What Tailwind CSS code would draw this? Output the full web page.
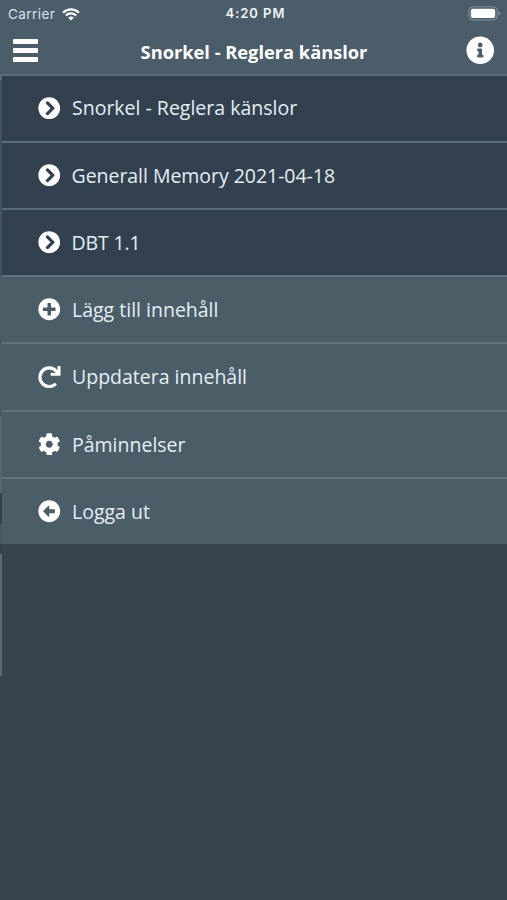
<!DOCTYPE html>
<html lang="sv">
<head>
<meta charset="utf-8">
<title>Snorkel</title>
<script src="https://cdn.jsdelivr.net/npm/@tailwindcss/browser@4"></script>
</head>
<body class="bg-[#38454c]">
<svg class="hidden">
  <symbol id="chevron" viewBox="0 0 512 512"><path d="M256 8c137 0 248 111 248 248S393 504 256 504 8 393 8 256 119 8 256 8zm113.9 231L234.4 103.5c-9.4-9.4-24.6-9.4-33.9 0l-17 17c-9.4 9.4-9.4 24.6 0 33.9L285.1 256 183.5 357.6c-9.4 9.4-9.4 24.6 0 33.9l17 17c9.4 9.4 24.6 9.4 33.9 0L369.9 273c9.4-9.4 9.4-24.6 0-34z"/></symbol>
</svg>
<div class="relative flex h-[900px] w-[507px] flex-col overflow-hidden bg-[#38454c] font-['Open_Sans',sans-serif] text-[#e4eef5]">
  <header class="h-[73.5px] shrink-0 bg-[#4b5d68]">
    <div class="flex h-[27px] items-center justify-between pr-[6px] pl-[8px] font-[Inter,sans-serif] text-[13px]">
      <div class="flex w-[100px] items-center gap-[7px] pt-px text-[#dbe3e8]">
        <span class="w-[47px] text-[13.5px] tracking-[0.45px]">Carrier</span>
        <svg class="h-[13px] w-[18px]" viewBox="0 0 18 13" fill="none" stroke="#fff" stroke-width="2.1"><path d="M1 4.7a11.3 11.3 0 0 1 16 0M3.8 7.6a7.3 7.3 0 0 1 10.4 0"/><path d="M9 12.6 6.2 9.8a4 4 0 0 1 5.6 0z" fill="#fff" stroke="none"/></svg>
      </div>
      <span class="pt-px pl-[2px] font-semibold tracking-[0.95px] text-[#eef3f6]">4:20 PM</span>
      <div class="flex w-[100px] justify-end">
        <svg class="h-[15px] w-[33px]" viewBox="0 0 33 15"><rect x=".8" y=".8" width="28.4" height="13.2" rx="4" fill="none" stroke="#87949c" stroke-width="1"/><rect x="2.8" y="2.8" width="24.4" height="9.2" rx="2" fill="#fff"/><path d="M30.7 5.2q1.6.7 1.6 2.3t-1.6 2.3z" fill="#87949c"/></svg>
      </div>
    </div>
    <div class="flex h-[47px] items-center justify-between pr-[12.5px] pl-[13px]">
      <div class="flex w-[29px] flex-col gap-[4.5px]">
        <span class="h-[4.5px] w-[25px] rounded-[1px] bg-white"></span>
        <span class="h-[4.5px] w-[25px] rounded-[1px] bg-white"></span>
        <span class="h-[4.5px] w-[25px] rounded-[1px] bg-white"></span>
      </div>
      <h1 class="pt-[3px] text-[18.25px] font-bold whitespace-nowrap text-white">Snorkel - Reglera känslor</h1>
      <svg class="size-[28.5px] fill-white" viewBox="0 0 512 512"><path d="M256 8C119 8 8 119 8 256s111 248 248 248 248-111 248-248S393 8 256 8zm0 110c23.2 0 42 18.8 42 42s-18.8 42-42 42-42-18.8-42-42 18.8-42 42-42zm56 254c0 6.6-5.4 12-12 12h-88c-6.6 0-12-5.4-12-12v-24c0-6.6 5.4-12 12-12h12v-64h-12c-6.6 0-12-5.4-12-12v-24c0-6.6 5.4-12 12-12h64c6.6 0 12 5.4 12 12v100h12c6.6 0 12 5.4 12 12v24z"/></svg>
    </div>
  </header>
  <nav class="ml-[2px] grid h-[470.5px] shrink-0 grid-rows-7 text-[19.5px] whitespace-nowrap">
    <a class="flex items-center gap-[11.5px] border-t-[2.5px] border-[#5b6d79] bg-[#33414e] pl-[36px]"><svg class="size-[22.5px] fill-white"><use href="#chevron"/></svg><span>Snorkel - Reglera känslor</span></a>
    <a class="flex items-center gap-[11.5px] border-t-[2.5px] border-[#5b6d79] bg-[#33414e] pl-[35.5px]"><svg class="size-[22.5px] fill-white"><use href="#chevron"/></svg><span class="tracking-[-0.04px]">Generall Memory 2021-04-18</span></a>
    <a class="flex items-center gap-[11.5px] border-t-[2.5px] border-[#5b6d79] bg-[#33414e] pl-[35.5px]"><svg class="size-[22.5px] fill-white"><use href="#chevron"/></svg><span class="tracking-[-0.15px]">DBT 1.1</span></a>
    <a class="flex items-center gap-[11.5px] border-t-[2.5px] border-[#63747f] bg-[#4b5d67] pl-[36px]"><svg class="size-[22.5px] fill-white" viewBox="0 0 512 512"><path d="M256 8C119 8 8 119 8 256s111 248 248 248 248-111 248-248S393 8 256 8zm144 276c0 6.6-5.4 12-12 12h-92v92c0 6.6-5.4 12-12 12h-56c-6.6 0-12-5.4-12-12v-92h-92c-6.6 0-12-5.4-12-12v-56c0-6.6 5.4-12 12-12h92v-92c0-6.6 5.4-12 12-12h56c6.6 0 12 5.4 12 12v92h92c6.6 0 12 5.4 12 12v56z"/></svg><span>Lägg till innehåll</span></a>
    <a class="flex items-center gap-[11.5px] border-t-[2.5px] border-[#63747f] bg-[#4b5d67] pl-[36px]"><svg class="size-[22.5px] fill-white" viewBox="0 0 512 512"><path d="M500.33 0h-47.41a12 12 0 0 0-12 12.57l4 82.76A247.42 247.42 0 0 0 256 8C119.34 8 7.9 119.53 8 256.19 8.1 393.07 119.1 504 256 504a247.1 247.1 0 0 0 166.18-63.91 12 12 0 0 0 .48-17.43l-34-34a12 12 0 0 0-16.38-.55A176 176 0 1 1 402.1 157.8l-101.53-4.87a12 12 0 0 0-12.57 12v47.41a12 12 0 0 0 12 12h200.33a12 12 0 0 0 12-12V12a12 12 0 0 0-12-12z"/></svg><span>Uppdatera innehåll</span></a>
    <a class="flex items-center gap-[11.5px] border-t-[2.5px] border-[#63747f] bg-[#4b5d67] pl-[36px]"><svg class="size-[22.5px] fill-white" viewBox="0 0 512 512"><path d="M487.4 315.7l-42.6-24.6c4.3-23.2 4.3-47 0-70.2l42.6-24.6c4.9-2.8 7.1-8.6 5.5-14-11.1-35.6-30-67.8-54.7-94.6-3.8-4.1-10-5.1-14.8-2.3L380.8 110c-17.9-15.4-38.5-27.3-60.8-35.1V25.8c0-5.6-3.9-10.5-9.4-11.7-36.7-8.2-74.3-7.8-109.2 0-5.5 1.2-9.4 6.1-9.4 11.7V75c-22.2 7.9-42.8 19.8-60.8 35.1L88.7 85.5c-4.9-2.8-11-1.9-14.8 2.3-24.7 26.7-43.6 58.9-54.7 94.6-1.7 5.4.6 11.2 5.5 14L67.3 221c-4.3 23.2-4.3 47 0 70.2l-42.6 24.6c-4.9 2.8-7.1 8.6-5.5 14 11.1 35.6 30 67.8 54.7 94.6 3.8 4.1 10 5.1 14.8 2.3l42.6-24.6c17.9 15.4 38.5 27.3 60.8 35.1v49.2c0 5.6 3.9 10.5 9.4 11.7 36.7 8.2 74.3 7.8 109.2 0 5.5-1.2 9.4-6.1 9.4-11.7v-49.2c22.2-7.9 42.8-19.8 60.8-35.1l42.6 24.6c4.9 2.8 11 1.9 14.8-2.3 24.7-26.7 43.6-58.9 54.7-94.6 1.5-5.5-.7-11.3-5.6-14.1zM256 336c-44.1 0-80-35.9-80-80s35.9-80 80-80 80 35.9 80 80-35.9 80-80 80z"/></svg><span>Påminnelser</span></a>
    <a class="flex items-center gap-[11.5px] border-t-[2.5px] border-[#63747f] bg-[#4b5d67] pl-[36px]"><svg class="size-[22.5px] fill-white" viewBox="0 0 512 512"><path d="M256 504C119 504 8 393 8 256S119 8 256 8s248 111 248 248-111 248-248 248zm116-292H256v-70.9c0-10.7-13-16.1-20.5-8.5L121.2 247.5c-4.7 4.7-4.7 12.2 0 16.9l114.3 114.9c7.6 7.6 20.5 2.2 20.5-8.5V300h116c6.6 0 12-5.4 12-12v-64c0-6.6-5.4-12-12-12z"/></svg><span>Logga ut</span></a>
  </nav>
  <!-- Edge of the page lying under the menu -->
  <div class="absolute top-[74px] left-0 flex w-[2px] flex-col">
    <span class="h-[6px] bg-[#5b6d79]"></span>
    <span class="h-[196px] bg-[#42525e]"></span>
    <span class="h-[140px] bg-[#4b5d67]"></span>
    <span class="h-[77px] bg-[#5b6570]"></span>
    <span class="h-[31px] bg-[#34434b]"></span>
    <span class="h-[20px] bg-[#46565f]"></span>
    <span class="h-[10px] bg-[#34424a]"></span>
    <span class="h-[122px] bg-[#5a6b74]"></span>
  </div>
</div>
</body>
</html>
